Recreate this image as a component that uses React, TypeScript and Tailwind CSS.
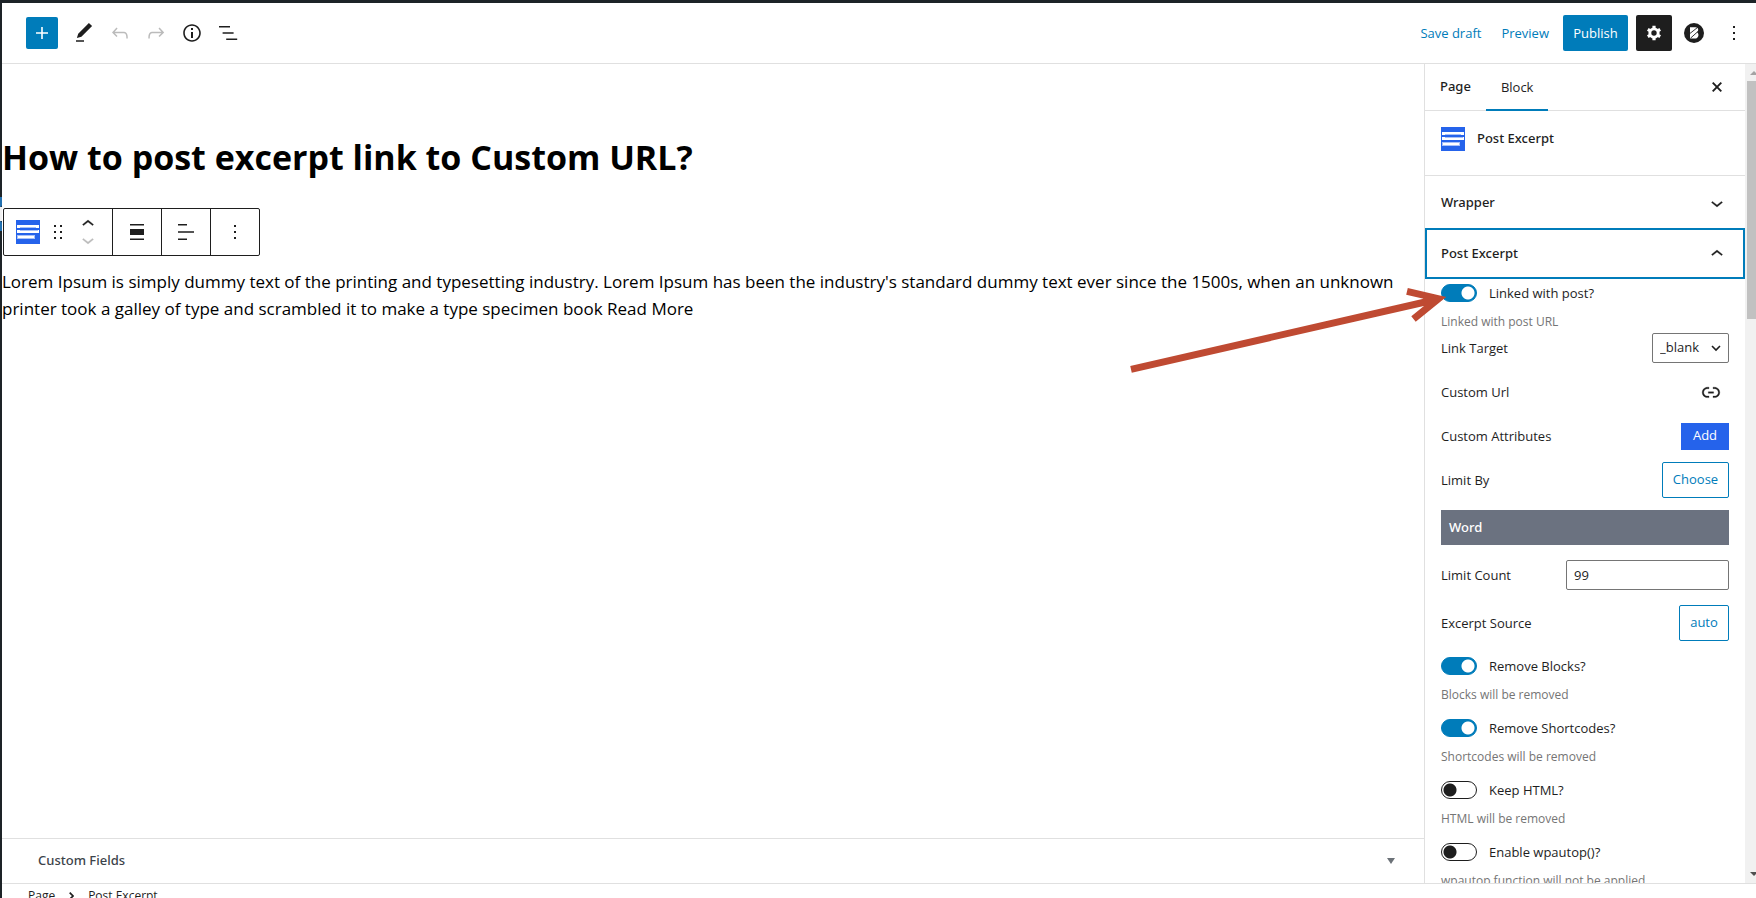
import React, { useState } from "react";

const LABEL = "text-[13px] leading-5 text-[#1e1e1e]";
const TITLE = "font-['Noto_Sans',sans-serif] font-medium";

function BlockIcon() {
  return (
    <svg width="24" height="24" viewBox="0 0 24 24" aria-hidden="true">
      <rect width="24" height="24" fill="#2563eb" />
      <rect x="1" y="5" width="22" height="3" fill="#fff" />
      <rect x="1" y="10" width="22" height="3" fill="#fff" />
      <rect x="1" y="15" width="18" height="4" fill="#a9c1f8" />
      <rect x="2" y="16" width="16" height="2" fill="#fff" />
      <rect x="4" y="7" width="16" height="1" fill="#a9c1f8" />
      <rect x="4" y="10" width="18" height="1" fill="#a9c1f8" />
    </svg>
  );
}

function WpIcon({ d, size = 24, bold = false }: { d: string; size?: number; bold?: boolean }) {
  return (
    <svg
      width={size}
      height={size}
      viewBox="0 0 24 24"
      fill="currentColor"
      stroke={bold ? "currentColor" : "none"}
      strokeWidth="0.3"
      aria-hidden="true"
    >
      <path d={d} />
    </svg>
  );
}

const ICONS = {
  plus: "M18 11.2h-5.2V6h-1.6v5.2H6v1.6h5.2V18h1.6v-5.2H18z",
  pencil: "M20.1 5.1L16.9 2 6.2 12.7l-1.3 4.4 4.5-1.3L20.1 5.1zM4 20.8h8v-1.5H4v1.5z",
  undo: "M18.3 11.7c-.6-.6-1.4-.9-2.3-.9H6.7l2.9-3.3-1.1-1-4.5 5L8.5 16l1-1-2.7-2.7H16c.5 0 .9.2 1.3.5 1 1 1 3.4 1 4.5v.3h1.5v-.2c0-1.5 0-4.3-1.5-5.7z",
  redo: "M15.6 6.5l-1.1 1 2.9 3.3H8c-.9 0-1.7.3-2.3.9-1.4 1.5-1.4 4.2-1.4 5.6v.2h1.5v-.3c0-1.1 0-3.5 1-4.5.3-.3.7-.5 1.3-.5h9.2L14.5 15l1.1 1.1 4.6-4.6-4.6-5z",
  info: "M12 3.2c-4.8 0-8.8 3.9-8.8 8.8 0 4.8 3.9 8.8 8.8 8.8 4.8 0 8.8-3.9 8.8-8.8 0-4.8-4-8.8-8.8-8.8zm0 16c-4 0-7.2-3.3-7.2-7.2C4.8 8 8 4.8 12 4.8s7.2 3.3 7.2 7.2c0 4-3.2 7.2-7.2 7.2zM11 17h2v-6h-2v6zm0-8h2V7h-2v2z",
  list: "M3 5h11v1.6H3zM6.6 11.2h11v1.6h-11zM10.2 17.4h11V19h-11z",
  more: "M11 5h2v2h-2zM11 11h2v2h-2zM11 17h2v2h-2z",
  down: "M17.5 11.6L12 16l-5.5-4.4.9-1.2L12 14l4.5-3.6 1 1.2z",
  up: "M6.5 12.4L12 8l5.5 4.4-.9 1.2L12 10l-4.5 3.6-1-1.2z",
  drag: "M8 7h2V5H8v2zm0 6h2v-2H8v2zm0 6h2v-2H8v2zm6-14v2h2V5h-2zm0 8h2v-2h-2v2zm0 6h2v-2h-2v2z",
  width: "M5 4h14v1.6H5zM5 9h14v6H5zM5 18.4h14V20H5z",
  align: "M4 4h9v1.6H4zM4 11.2h16v1.6H4zM4 18.4h9V20H4z",
  link: "M15.6 7.2H14v1.5h1.6c2 0 3.7 1.7 3.7 3.7s-1.7 3.7-3.7 3.7H14v1.5h1.6c2.8 0 5.2-2.3 5.2-5.2 0-2.9-2.3-5.2-5.2-5.2zM4.7 12.4c0-2 1.7-3.7 3.7-3.7H10V7.2H8.4c-2.9 0-5.2 2.3-5.2 5.2 0 2.9 2.3 5.2 5.2 5.2H10v-1.5H8.4c-2 0-3.7-1.7-3.7-3.7zm4.6.9h5.3v-1.5H9.3v1.5z",
};

function GearIcon() {
  return (
    <svg width="16" height="16" viewBox="0 0 16 16" aria-hidden="true">
      <path d="M8 .8v14.400M1.800 4.400l12.400 7.200M14.200 4.400L1.800 11.600" stroke="currentColor" strokeWidth="3.200" />
      <circle cx="8" cy="8" r="5.600" fill="currentColor" />
      <circle cx="8" cy="8" r="2.700" fill="#1e1e1e" />
    </svg>
  );
}

function Toggle({ label, help, initial }: { label: string; help: string; initial: boolean }) {
  const [on, setOn] = useState(initial);
  return (
    <div>
      <label className="flex h-6 items-center gap-3">
        <input
          type="checkbox"
          checked={on}
          onChange={() => setOn(!on)}
          className="h-[18px] w-9 shrink-0 appearance-none rounded-full border border-[#1e1e1e] bg-white bg-[radial-gradient(circle_at_8px_8px,#1e1e1e_6px,transparent_7px)] checked:border-[#007cba] checked:bg-[#007cba] checked:bg-[radial-gradient(circle_at_26px_8px,#fff_6px,transparent_7px)]"
        />
        <span className={LABEL}>{label}</span>
      </label>
      <p className="mt-[7px] text-xs leading-5 text-[#757575]">{help}</p>
    </div>
  );
}

export default function App() {
  const [target, setTarget] = useState("_blank");
  const [count, setCount] = useState("99");
  return (
    <div className="relative flex h-screen overflow-hidden bg-white font-['Open_Sans','Noto_Sans',sans-serif] text-[13px] text-[#1e1e1e]">
      <div className="flex w-0.5 shrink-0 flex-col bg-[#1d2327] pt-[197px]">
        <div className="h-[10px] rounded-br-xs bg-[#2271b1]" />
        <div className="h-[14px] bg-[#f0f0f1]" />
        <div className="h-[10px] rounded-tr-xs bg-[#2271b1]" />
      </div>

      <div className="flex min-w-0 flex-1 flex-col border-t-[3px] border-[#1d2327]">
        <header className="flex h-[61px] shrink-0 items-center justify-between border-b border-[#e0e0e0] pr-2.5 pl-6">
          <div className="flex items-center gap-3">
            <button aria-label="Add block" className="mr-0.5 flex size-8 items-center justify-center rounded-xs bg-[#007cba] text-white"><WpIcon d={ICONS.plus} /></button>
            <button aria-label="Tools"><WpIcon d={ICONS.pencil} /></button>
            <button aria-label="Undo" className="text-[#bbb]"><WpIcon d={ICONS.undo} /></button>
            <button aria-label="Redo" className="text-[#bbb]"><WpIcon d={ICONS.redo} /></button>
            <button aria-label="Details"><WpIcon d={ICONS.info} /></button>
            <button aria-label="List view"><WpIcon d={ICONS.list} /></button>
          </div>
          <div className="flex items-center">
            <button className="mr-5 pt-0.5 text-[#007cba]">Save draft</button>
            <button className="mr-3.5 pt-0.5 text-[#007cba]">Preview</button>
            <button className="h-9 w-[65px] rounded-xs bg-[#007cba] pt-0.5 text-white">Publish</button>
            <button aria-label="Settings" className="ml-2 flex size-9 items-center justify-center rounded-xs bg-[#1e1e1e] text-white"><GearIcon /></button>
            <button aria-label="Block library" className="ml-3">
              <svg width="20" height="20" viewBox="0 0 20 20" aria-hidden="true">
                <circle cx="10" cy="10" r="10" fill="#1e1e1e" />
                <path d="M6 4.200h5.500c2.800 0 3.600 3.100 1.600 5 2.400 1.600 1.600 6.400-2.100 6.400H6z" fill="#fff" />
                <path d="M5 11.200L13.500 4.500M6.500 15.200L14.500 8" stroke="#1e1e1e" strokeWidth="0.9" />
              </svg>
            </button>
            <button aria-label="Options" className="ml-[18px]"><WpIcon d={ICONS.more} /></button>
          </div>
        </header>

        <div className="flex min-h-0 flex-1">
          <main className="flex min-w-0 flex-1 flex-col">
            <div className="min-h-0 flex-1 pt-[68px]">
              <h1 className="text-[34px] leading-[50px] font-bold text-black">How to post excerpt link to Custom URL?</h1>
              <div className="mt-[26px] ml-px flex h-12 w-fit divide-x divide-[#1e1e1e] rounded-xs border border-[#1e1e1e]">
                <div className="flex w-[109px] items-center pl-3">
                  <button aria-label="Post Excerpt block"><BlockIcon /></button>
                  <button aria-label="Drag" className="ml-1.5"><WpIcon d={ICONS.drag} /></button>
                  <div className="ml-1.5 flex flex-col">
                    <button aria-label="Move up" className="flex h-4 items-center overflow-hidden"><WpIcon d={ICONS.up} bold /></button>
                    <button aria-label="Move down" className="flex h-4 items-center overflow-hidden text-[#bbb]"><WpIcon d={ICONS.down} bold /></button>
                  </div>
                </div>
                <button aria-label="Width" className="flex w-[49px] items-center justify-center"><WpIcon d={ICONS.width} /></button>
                <button aria-label="Align" className="flex w-[49px] items-center justify-center"><WpIcon d={ICONS.align} /></button>
                <button aria-label="More options" className="flex w-12 items-center justify-center"><WpIcon d={ICONS.more} /></button>
              </div>
              <p className="mt-3 text-[17px] leading-[27px] text-black">
                Lorem Ipsum is simply dummy text of the printing and typesetting industry. Lorem Ipsum has been the industry's standard dummy text ever since the 1500s, when an unknown printer took a galley of type and scrambled it to make a type specimen book <a href="#more">Read More</a>
              </p>
            </div>
            <button className={`flex h-[45px] shrink-0 items-center justify-between border-t border-[#e0e0e0] pr-[29px] pl-9 text-[#3c434a] ${TITLE}`}>
              Custom Fields
              <svg width="8" height="6" viewBox="0 0 8 6" aria-hidden="true"><path d="M0 0h8L4 6z" fill="#6c7278" /></svg>
            </button>
          </main>

          <aside className="flex w-[332px] shrink-0 overflow-hidden border-l border-[#e0e0e0]">
            <div className="min-w-0 flex-1">
              <div className="flex h-[47px] items-center justify-between border-b border-[#e0e0e0] pr-[23px]">
                <div className="flex h-full" role="tablist">
                  <button role="tab" className={`px-[15px] ${TITLE}`}>Page</button>
                  <button role="tab" className="-mb-px border-b-2 border-[#007cba] px-[15px] pt-0.5">Block</button>
                </div>
                <button aria-label="Close settings">
                  <svg width="10" height="10" viewBox="0 0 10 10" aria-hidden="true"><path d="M.7.7l8.600 8.600M9.300.7L.7 9.300" stroke="currentColor" strokeWidth="1.900" /></svg>
                </button>
              </div>
              <div className="flex h-[65px] items-center gap-3 border-b border-[#e0e0e0] px-4 pb-2">
                <BlockIcon />
                <h2 className={TITLE}>Post Excerpt</h2>
              </div>
              <button className={`flex h-[52px] w-full items-center justify-between px-4 pt-0.5 ${TITLE}`}>Wrapper<WpIcon d={ICONS.down} bold /></button>
              <button className={`flex h-[51px] w-full items-center justify-between border-2 border-[#007cba] px-3.5 ${TITLE}`}>Post Excerpt<WpIcon d={ICONS.up} bold /></button>
              <div className="px-4 pt-0.5">
                <Toggle label="Linked with post?" help="Linked with post URL" initial />
                <div className="flex h-8 items-center justify-between">
                  <label htmlFor="target" className={LABEL}>Link Target</label>
                  <div className="relative">
                    <select id="target" value={target} onChange={(e) => setTarget(e.target.value)} className="block h-[30px] w-[77px] appearance-none rounded-xs border border-[#757575] bg-white pl-[7px]">
                      <option>_blank</option>
                      <option>_self</option>
                    </select>
                    <svg className="pointer-events-none absolute top-3 right-2" width="10" height="7" viewBox="0 0 10 7" aria-hidden="true"><path d="M1 1l4 4 4-4" fill="none" stroke="#1e1e1e" strokeWidth="1.600" /></svg>
                  </div>
                </div>
                <div className="mt-3 flex h-8 items-center justify-between">
                  <span className={LABEL}>Custom Url</span>
                  <button aria-label="Edit link" className="mr-1.5"><WpIcon d={ICONS.link} bold /></button>
                </div>
                <div className="mt-3 flex h-8 items-center justify-between">
                  <span className={LABEL}>Custom Attributes</span>
                  <button className="h-[27px] w-12 bg-[#2563eb] text-white">Add</button>
                </div>
                <div className="mt-2.5 flex h-9 items-center justify-between">
                  <span className={LABEL}>Limit By</span>
                  <button className="h-9 w-[67px] rounded-xs border border-[#007cba] text-[#007cba]">Choose</button>
                </div>
                <div className={`mt-3 h-[35px] bg-[#6b7280] px-2 leading-[35px] text-white ${TITLE}`}>Word</div>
                <div className="mt-[15px] flex h-[30px] items-center justify-between">
                  <label htmlFor="count" className={LABEL}>Limit Count</label>
                  <input id="count" value={count} onChange={(e) => setCount(e.target.value)} className="h-[30px] w-[163px] rounded-xs border border-[#757575] px-[7px]" />
                </div>
                <div className="mt-[15px] mb-[13px] flex h-9 items-center justify-between">
                  <span className={LABEL}>Excerpt Source</span>
                  <button className="h-9 w-[50px] rounded-xs border border-[#007cba] text-[#007cba]">auto</button>
                </div>
                <div className="flex flex-col gap-[11px]">
                  <Toggle label="Remove Blocks?" help="Blocks will be removed" initial />
                  <Toggle label="Remove Shortcodes?" help="Shortcodes will be removed" initial />
                  <Toggle label="Keep HTML?" help="HTML will be removed" initial={false} />
                  <Toggle label="Enable wpautop()?" help="wpautop function will not be applied." initial={false} />
                </div>
              </div>
            </div>
            <div className="flex w-[11px] shrink-0 flex-col items-end bg-[#f1f1f1]">
              <svg className="mt-[7px] mb-1.5 shrink-0" width="6" height="4" viewBox="0 0 6 4" aria-hidden="true"><path d="M0 4l4-4 4 4z" fill="#a3a3a3" /></svg>
              <div className="h-[238px] w-[9px] bg-[#c1c1c1]" />
              <svg className="mt-auto mb-[7px] shrink-0" width="6" height="4" viewBox="0 0 6 4" aria-hidden="true"><path d="M0 0l4 4 4-4z" fill="#505050" /></svg>
            </div>
          </aside>
        </div>

        <footer className="flex h-[15px] shrink-0 items-start gap-3.5 overflow-hidden border-t border-[#e0e0e0] pt-1 pl-[26px] text-xs">
          <a href="#page">Page</a>
          <svg className="mt-1 shrink-0" width="5" height="8" viewBox="0 0 5 8" aria-hidden="true"><path d="M.7.7L4 4 .7 7.300" fill="none" stroke="currentColor" strokeWidth="1.700" /></svg>
          <span>Post Excerpt</span>
        </footer>
      </div>

      <svg className="pointer-events-none absolute top-[280px] left-[1126px]" width="324" height="94" viewBox="0 0 324 94" aria-hidden="true">
        <path d="M5 89.300L308 20M281 11.300l31.500 7.400L287.500 39" fill="none" stroke="#bf4a32" strokeWidth="7" />
      </svg>
    </div>
  );
}
